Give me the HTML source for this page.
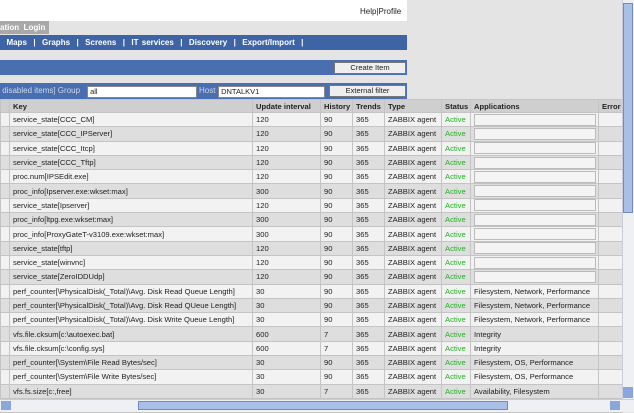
<!DOCTYPE html><html><head><style>
body{margin:0;width:634px;height:411px;overflow:hidden;background:#e4e4e4;font-family:"Liberation Sans",Verdana,sans-serif;font-size:8px;color:#222;position:relative}
.a{position:absolute}
table{border-collapse:collapse;position:absolute;left:0;top:99px;width:622px;table-layout:fixed}
td{height:13.3px;padding:0 0 0 3px;border:1px solid #c4c4c4;white-space:nowrap;overflow:hidden;font-size:7.6px}
tr.h td{font-weight:bold;background:#cfcfcf;height:12px}
tr:nth-child(even) td{background:#f2f2f2}
tr:nth-child(odd):not(.h) td{background:#dedede}
.s{color:#22b022}
.bx{display:block;height:10px;background:#f4f4f4;border:1px solid #bbb;margin-right:2px}
.btn{position:absolute;background:#eee;border:1px solid #777;font-size:7.5px;text-align:center;line-height:10px}
</style></head><body>
<div class="a" style="left:0;top:0;width:407px;height:21px;background:#fff"></div>
<div class="a" style="left:360px;top:7px;font-size:8px">Help|Profile</div>
<div class="a" style="left:0;top:21px;width:49px;height:13px;background:#a9a9a9;color:#fff;font-weight:bold;line-height:13px">ation&nbsp; Login</div>
<div class="a" style="left:0;top:35px;width:407px;height:15px;background:#3e64a6;color:#fff;font-weight:bold;line-height:15px;word-spacing:1px">&nbsp;&nbsp;Maps &nbsp;|&nbsp; Graphs &nbsp;|&nbsp; Screens &nbsp;|&nbsp; IT services &nbsp;|&nbsp; Discovery &nbsp;|&nbsp; Export/Import &nbsp;|</div>
<div class="a" style="left:0;top:60px;width:407px;height:15px;background:#4a6fb0"></div>
<div class="btn" style="left:334px;top:62px;width:70px">Create Item</div>
<div class="a" style="left:0;top:83px;width:407px;height:16px;background:#4a6fb0;color:#cfd8ea;line-height:16px">&nbsp;disabled items] Group</div>
<div class="a" style="left:87px;top:86px;width:108px;height:10px;background:#fff;border:1px solid #888;font-size:7.5px;line-height:10px">&nbsp;all</div>
<div class="a" style="left:199px;top:83px;color:#cfd8ea;line-height:16px">Host</div>
<div class="a" style="left:218px;top:86px;width:105px;height:10px;background:#fff;border:1px solid #888;font-size:7.5px;line-height:10px">&nbsp;DNTALKV1</div>
<div class="btn" style="left:329px;top:85px;width:75px">External filter</div>
<table>
<colgroup><col style="width:9px"><col style="width:243px"><col style="width:68px"><col style="width:32px"><col style="width:32px"><col style="width:57px"><col style="width:29px"><col style="width:128px"><col style="width:24px"></colgroup>
<tr class="h"><td></td><td>Key</td><td>Update interval</td><td>History</td><td>Trends</td><td>Type</td><td>Status</td><td>Applications</td><td>Error</td></tr>
<tr><td></td><td>service_state[CCC_CM]</td><td>120</td><td>90</td><td>365</td><td>ZABBIX agent</td><td class="s">Active</td><td><span class="bx"></span></td><td></td></tr>
<tr><td></td><td>service_state[CCC_IPServer]</td><td>120</td><td>90</td><td>365</td><td>ZABBIX agent</td><td class="s">Active</td><td><span class="bx"></span></td><td></td></tr>
<tr><td></td><td>service_state[CCC_Itcp]</td><td>120</td><td>90</td><td>365</td><td>ZABBIX agent</td><td class="s">Active</td><td><span class="bx"></span></td><td></td></tr>
<tr><td></td><td>service_state[CCC_Tftp]</td><td>120</td><td>90</td><td>365</td><td>ZABBIX agent</td><td class="s">Active</td><td><span class="bx"></span></td><td></td></tr>
<tr><td></td><td>proc.num[IPSEdit.exe]</td><td>120</td><td>90</td><td>365</td><td>ZABBIX agent</td><td class="s">Active</td><td><span class="bx"></span></td><td></td></tr>
<tr><td></td><td>proc_info[Ipserver.exe:wkset:max]</td><td>300</td><td>90</td><td>365</td><td>ZABBIX agent</td><td class="s">Active</td><td><span class="bx"></span></td><td></td></tr>
<tr><td></td><td>service_state[Ipserver]</td><td>120</td><td>90</td><td>365</td><td>ZABBIX agent</td><td class="s">Active</td><td><span class="bx"></span></td><td></td></tr>
<tr><td></td><td>proc_info[ltpg.exe:wkset:max]</td><td>300</td><td>90</td><td>365</td><td>ZABBIX agent</td><td class="s">Active</td><td><span class="bx"></span></td><td></td></tr>
<tr><td></td><td>proc_info[ProxyGateT-v3109.exe:wkset:max]</td><td>300</td><td>90</td><td>365</td><td>ZABBIX agent</td><td class="s">Active</td><td><span class="bx"></span></td><td></td></tr>
<tr><td></td><td>service_state[tftp]</td><td>120</td><td>90</td><td>365</td><td>ZABBIX agent</td><td class="s">Active</td><td><span class="bx"></span></td><td></td></tr>
<tr><td></td><td>service_state[winvnc]</td><td>120</td><td>90</td><td>365</td><td>ZABBIX agent</td><td class="s">Active</td><td><span class="bx"></span></td><td></td></tr>
<tr><td></td><td>service_state[ZeroIDDUdp]</td><td>120</td><td>90</td><td>365</td><td>ZABBIX agent</td><td class="s">Active</td><td><span class="bx"></span></td><td></td></tr>
<tr><td></td><td>perf_counter[\PhysicalDisk(_Total)\Avg. Disk Read Queue Length]</td><td>30</td><td>90</td><td>365</td><td>ZABBIX agent</td><td class="s">Active</td><td>Filesystem, Network, Performance</td><td></td></tr>
<tr><td></td><td>perf_counter[\PhysicalDisk(_Total)\Avg. Disk Read QUeue Length]</td><td>30</td><td>90</td><td>365</td><td>ZABBIX agent</td><td class="s">Active</td><td>Filesystem, Network, Performance</td><td></td></tr>
<tr><td></td><td>perf_counter[\PhysicalDisk(_Total)\Avg. Disk Write Queue Length]</td><td>30</td><td>90</td><td>365</td><td>ZABBIX agent</td><td class="s">Active</td><td>Filesystem, Network, Performance</td><td></td></tr>
<tr><td></td><td>vfs.file.cksum[c:\autoexec.bat]</td><td>600</td><td>7</td><td>365</td><td>ZABBIX agent</td><td class="s">Active</td><td>Integrity</td><td></td></tr>
<tr><td></td><td>vfs.file.cksum[c:\config.sys]</td><td>600</td><td>7</td><td>365</td><td>ZABBIX agent</td><td class="s">Active</td><td>Integrity</td><td></td></tr>
<tr><td></td><td>perf_counter[\System\File Read Bytes/sec]</td><td>30</td><td>90</td><td>365</td><td>ZABBIX agent</td><td class="s">Active</td><td>Filesystem, OS, Performance</td><td></td></tr>
<tr><td></td><td>perf_counter[\System\File Write Bytes/sec]</td><td>30</td><td>90</td><td>365</td><td>ZABBIX agent</td><td class="s">Active</td><td>Filesystem, OS, Performance</td><td></td></tr>
<tr><td></td><td>vfs.fs.size[c:,free]</td><td>30</td><td>7</td><td>365</td><td>ZABBIX agent</td><td class="s">Active</td><td>Availability, Filesystem</td><td></td></tr>
<tr><td></td><td></td><td></td><td></td><td></td><td></td><td></td><td></td><td></td></tr>
</table>
<div class="a" style="left:622px;top:0;width:12px;height:399px;background:#eef0f4;border-left:1px solid #c8cdd8"></div>
<div class="a" style="left:623px;top:3px;width:10px;height:210px;background:#a9bfe6;border:1px solid #6e8cc4;box-sizing:border-box"></div>
<div class="a" style="left:623px;top:387px;width:10px;height:11px;background:#8aa6dc"></div>
<div class="a" style="left:0;top:399px;width:634px;height:12px;background:#eef0f4;border-top:1px solid #c8cdd8"></div>
<div class="a" style="left:1px;top:401px;width:10px;height:9px;background:#8aa6dc"></div>
<div class="a" style="left:138px;top:401px;width:370px;height:9px;background:#a9bfe6;border:1px solid #6e8cc4;box-sizing:border-box"></div>
<div class="a" style="left:610px;top:401px;width:10px;height:9px;background:#8aa6dc"></div>
</body></html>
